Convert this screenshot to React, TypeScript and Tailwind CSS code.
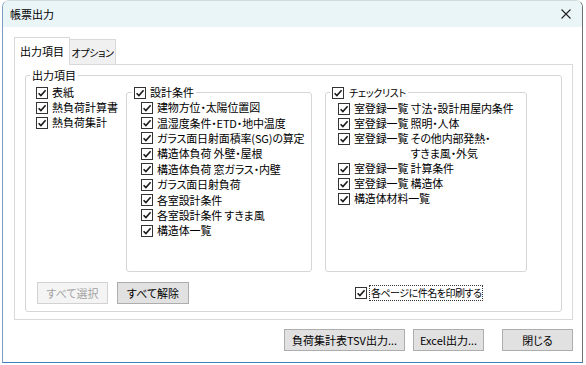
import React from 'react';

const Box: React.FC = () => (
  <span className="w-[12px] h-[12px] shrink-0 border border-[#333333] bg-white flex items-center justify-center">
    <svg width="10" height="10" viewBox="0 0 10 10">
      <path d="M1.6 5.2 L3.9 7.6 L8.6 2.2" fill="none" stroke="#1a1a1a" strokeWidth="1.6" />
    </svg>
  </span>
);

const Check: React.FC<{ label: React.ReactNode; h?: string }> = ({ label, h = 'h-[15px]' }) => (
  <div className={`flex items-center gap-[4px] ${h}`}>
    <Box />
    <span className="whitespace-nowrap">{label}</span>
  </div>
);

const sekkei = [
  '建物方位・太陽位置図',
  '温湿度条件・ETD・地中温度',
  'ガラス面日射面積率(SG)の算定',
  '構造体負荷 外壁・屋根',
  '構造体負荷 窓ガラス・内壁',
  'ガラス面日射負荷',
  '各室設計条件',
  '各室設計条件 すきま風',
  '構造体一覧',
];

const Btn: React.FC<{ w: string; disabled?: boolean; children: React.ReactNode; className?: string }> = ({ w, disabled, children, className = '' }) => (
  <button
    className={`${w} h-[22px] border text-[11px] flex items-center justify-center ${
      disabled ? 'bg-[#f4f4f4] border-[#d2d2d2] text-[#a3a3a3]' : 'bg-[#e1e1e1] border-[#adadad] text-black'
    } ${className}`}
  >
    {children}
  </button>
);

export default function App() {
  return (
    <div className="w-[586px] h-[365px] bg-white text-[11px] leading-[15px] text-black font-['Noto_Sans_CJK_JP','Noto_Sans',sans-serif] [font-feature-settings:'palt']">
      <div className="ml-[2px] w-[581px] h-[363px] flex flex-col border border-t-[#d3dbde] border-l-[#7c9dc0] border-r-[#707070] border-b-[#3f80c2] rounded-t-[7px] overflow-hidden">
        {/* title bar */}
        <div className="h-[26px] shrink-0 bg-[#eaf5f8] flex items-center justify-between pl-[7px] pr-[11px]">
          <span>帳票出力</span>
          <svg width="10" height="10" viewBox="0 0 10 10">
            <path d="M0.5 0.5 L9.5 9.5 M9.5 0.5 L0.5 9.5" stroke="#222" strokeWidth="1.1" />
          </svg>
        </div>

        <div className="flex-1 flex flex-col pt-[10px] pl-[11px] pr-[9px] bg-white">
          {/* tabs */}
          <div className="flex items-end h-[27px]">
            <div className="relative z-10 -mb-px w-[56px] h-[28px] bg-white border border-b-0 border-[#d9d9d9] flex items-center justify-center pb-[1px]">
              出力項目
            </div>
            <div className="w-[46px] h-[25px] bg-[#f0f0f0] border border-l-0 border-b-0 border-[#d9d9d9] flex items-center justify-center text-[10px] tracking-[-0.4px]">
              オプション
            </div>
          </div>

          {/* tab panel */}
          <div className="w-[559px] h-[256px] border border-[#d9d9d9] bg-white">
            <fieldset className="ml-[10px] mt-[2px] w-[537px] h-[245px] border border-[#d6d6d6] rounded-[3px]">
              <legend className="ml-[4px] px-[2px] leading-[16px]">出力項目</legend>
              <div className="flex flex-col pl-[10px] pt-[2px]">
                <div className="flex items-start">
                  <div className="w-[90px] flex flex-col">
                    <Check label="表紙" />
                    <Check label="熱負荷計算書" />
                    <Check label="熱負荷集計" />
                  </div>

                  <fieldset className="w-[186px] h-[187px] border border-[#d6d6d6] rounded-[3px]">
                    <legend className="ml-[5px] px-[2px]">
                      <Check label="設計条件" />
                    </legend>
                    <div className="flex flex-col pl-[14px] tracking-[-0.15px]">
                      {sekkei.map((s) => (
                        <Check key={s} label={s} h="h-[15.4px]" />
                      ))}
                    </div>
                  </fieldset>

                  <fieldset className="ml-[13px] w-[202px] h-[187px] border border-[#d6d6d6] rounded-[3px]">
                    <legend className="ml-[4px] px-[2px]">
                      <div className="flex items-center gap-[5px] h-[15px]">
                        <Box />
                        <span className="text-[10px] tracking-[-0.3px]">チェックリスト</span>
                      </div>
                    </legend>
                    <div className="flex flex-col pl-[12px] pt-[1px] tracking-[-0.15px]">
                      <Check label="室登録一覧 寸法・設計用屋内条件" />
                      <Check label="室登録一覧 照明・人体" />
                      <div className="flex items-start gap-[4px]">
                        <span className="h-[15px] flex items-center">
                          <Box />
                        </span>
                        <span className="flex whitespace-nowrap">
                          <span>室登録一覧&nbsp;</span>
                          <span className="flex flex-col">
                            <span>その他内部発熱・</span>
                            <span>すきま風・外気</span>
                          </span>
                        </span>
                      </div>
                      <Check label="室登録一覧 計算条件" />
                      <Check label="室登録一覧 構造体" />
                      <Check label="構造体材料一覧" />
                    </div>
                  </fieldset>
                </div>

                <div className="flex items-center mt-[10px] ml-[1px]">
                  <Btn w="w-[71px]" disabled>すべて選択</Btn>
                  <Btn w="w-[72px]" className="ml-[9px]">すべて解除</Btn>
                  <div className="ml-[166px] flex items-center gap-[2px]">
                    <Box />
                    <span className="border border-dotted border-[#333] px-[1px] leading-[14px] text-[10px] tracking-[-0.5px]">各ページに件名を印刷する</span>
                  </div>
                </div>
              </div>
            </fieldset>
          </div>

          {/* dialog buttons */}
          <div className="flex justify-end mt-[9px]">
            <Btn w="w-[121px]">負荷集計表TSV出力...</Btn>
            <Btn w="w-[71px]" className="ml-[8px]">Excel出力...</Btn>
            <Btn w="w-[71px]" className="ml-[18px]">閉じる</Btn>
          </div>
        </div>
      </div>
    </div>
  );
}
